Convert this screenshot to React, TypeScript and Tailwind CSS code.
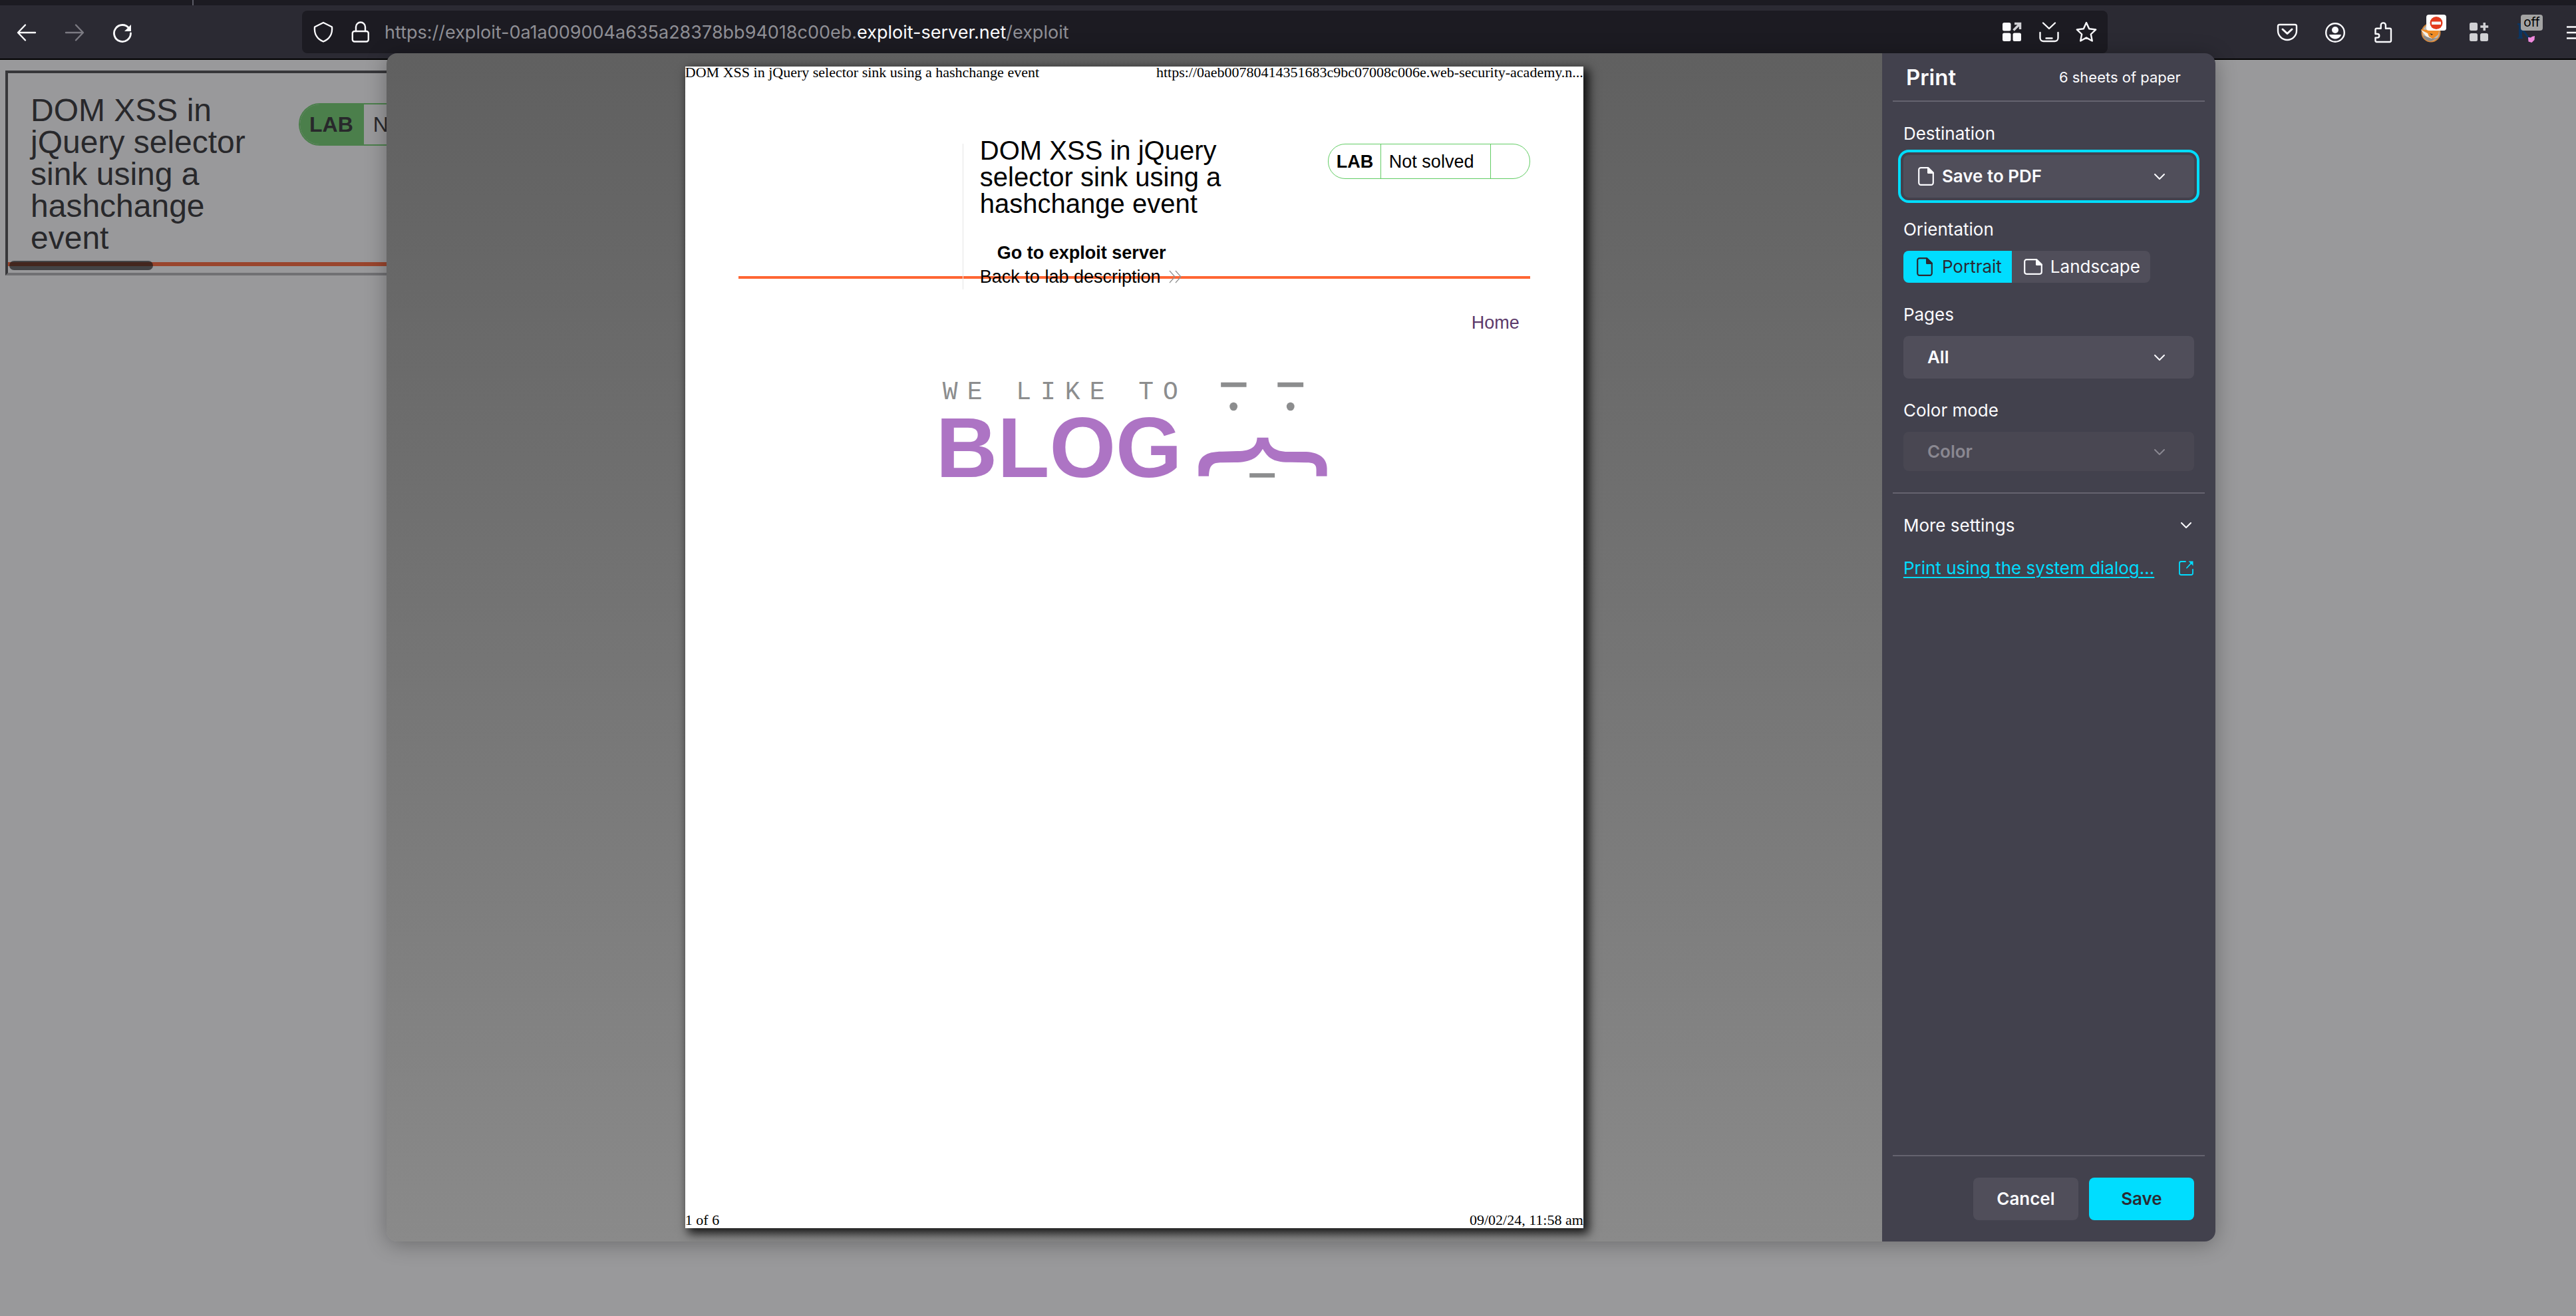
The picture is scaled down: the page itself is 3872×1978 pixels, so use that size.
import type { ReactNode } from "react";

type IconProps = { className?: string; children: ReactNode; viewBox?: string };

function Icon({ className = "size-8", children, viewBox = "0 0 32 32" }: IconProps) {
  return (
    <svg
      viewBox={viewBox}
      className={className}
      fill="none"
      stroke="currentColor"
      strokeWidth="2.4"
      strokeLinecap="round"
      strokeLinejoin="round"
      aria-hidden="true"
    >
      {children}
    </svg>
  );
}

function ToolButton({ label, children, className = "w-[72px]" }: { label: string; children: ReactNode; className?: string }) {
  return (
    <button type="button" aria-label={label} className={`relative flex h-16 shrink-0 items-center justify-center ${className}`}>
      {children}
    </button>
  );
}

function Chevron({ className }: { className: string }) {
  return (
    <svg viewBox="0 0 16 10" className={`h-[10px] w-4 ${className}`} fill="none" stroke="currentColor" strokeWidth="2" strokeLinecap="round" strokeLinejoin="round" aria-hidden="true">
      <path d="M1 1l7 7 7-7" />
    </svg>
  );
}

function PortraitIcon() {
  return (
    <svg viewBox="0 0 16 16" className="size-8 shrink-0" aria-hidden="true">
      <path fill="none" stroke="currentColor" strokeWidth="1.1" strokeLinejoin="round" d="M4 1.6h5.6l3.8 3.9v7.4a1.5 1.5 0 0 1-1.5 1.5H4.1a1.5 1.5 0 0 1-1.5-1.5V3.1A1.5 1.5 0 0 1 4.1 1.6z" />
      <path fill="currentColor" d="M9 1.2h1L13.9 5v1H9.8a.8.8 0 0 1-.8-.8z" />
    </svg>
  );
}

function LandscapeIcon() {
  return (
    <svg viewBox="0 0 16 16" className="size-8 shrink-0" aria-hidden="true">
      <path fill="none" stroke="currentColor" strokeWidth="1.1" strokeLinejoin="round" d="M3 2.6h7.6l3.8 3.9v5.4a1.5 1.5 0 0 1-1.5 1.5H3.1a1.5 1.5 0 0 1-1.5-1.5V4.1A1.5 1.5 0 0 1 3.1 2.6z" />
      <path fill="currentColor" d="M10 2.2h1L14.9 6v1h-4.1a.8.8 0 0 1-.8-.8z" />
    </svg>
  );
}

function Toolbar() {
  return (
    <header className="border-b-2 border-black bg-[#2b2a33] text-[#fbfbfe]">
      <div className="h-2 bg-[#1c1b22] pl-[289px]">
        <div className="h-2 w-0.5 bg-[#5b5b66]" />
      </div>
      <div className="flex h-20 items-center overflow-hidden pl-1 pt-0.5">
        <ToolButton label="Back">
          <Icon><path d="M29 16H4M14 4.500L3 16l11 11.500" /></Icon>
        </ToolButton>
        <ToolButton label="Forward">
          <Icon className="size-8 text-[#7b7a82]"><path d="M3 16h25M18 4.500L29 16 18 27.500" /></Icon>
        </ToolButton>
        <ToolButton label="Reload">
          <Icon>
            <path d="M26 9.500A12.500 12.500 0 1 0 28.500 17" strokeWidth="2.800" />
            <path d="M29 4v10h-10z" fill="currentColor" stroke="none" />
          </Icon>
        </ToolButton>

        <div className="-mt-0.5 ml-[234px] flex h-16 min-w-0 flex-1 items-center rounded-lg bg-[#1c1b22] px-1">
          <ToolButton label="Tracking protection" className="w-14">
            <Icon><path d="M16 2L29 8.500C30 19 25 27 16 30.500 7 27 2 19 3 8.500z" /></Icon>
          </ToolButton>
          <ToolButton label="Connection secure" className="w-14">
            <Icon>
              <rect x="3.800" y="15" width="24" height="15.500" rx="3" />
              <path d="M9 15V8.500a7 7 0 0 1 14 0V15" />
            </Icon>
          </ToolButton>
          <div role="textbox" aria-label="Address" className="min-w-0 flex-1 truncate pl-2 pt-0.5 font-['Inter',sans-serif] text-[27px] leading-9 text-[#8f8f95]">
            https://exploit-0a1a009004a635a28378bb94018c00eb.<span className="text-[#fbfbfe]">exploit-server.net</span>/exploit
          </div>
          <ToolButton label="Shortcuts" className="w-14">
            <Icon>
              <g fill="currentColor" stroke="none">
                <rect x="2" y="2" width="12.500" height="12.500" rx="2.500" />
                <rect x="2" y="17.500" width="12.500" height="12.500" rx="2.500" />
                <rect x="17.500" y="17.500" width="12.500" height="12.500" rx="2.500" />
              </g>
              <path d="M18.500 13.500L28 4M20 3.500h8.500V12" stroke="#d0d0d4" strokeWidth="3.500" strokeLinecap="butt" strokeLinejoin="miter" />
            </Icon>
          </ToolButton>
          <ToolButton label="Save page" className="w-14">
            <Icon><path d="M7 2.500l9 8.500 9-8.500M2.500 17v8a5 5 0 0 0 5 5h17a5 5 0 0 0 5-5v-8M11.500 25.500h9" /></Icon>
          </ToolButton>
          <ToolButton label="Bookmark" className="w-14">
            <Icon><path d="M16 2l4.200 9.300 10 1.200-7.400 7 2 10L16 24.600 7.200 29.500l2-10-7.400-7 10-1.200z" /></Icon>
          </ToolButton>
        </div>

        <div className="ml-[234px] flex">
          <ToolButton label="Pocket">
            <Icon>
              <path d="M4.500 4h23A2.500 2.500 0 0 1 30 6.500V13a14 14 0 0 1-28 0V6.500A2.500 2.500 0 0 1 4.500 4z" />
              <path d="M9 11l7 6.500 7-6.500" strokeWidth="3" />
            </Icon>
          </ToolButton>
          <ToolButton label="Account">
            <Icon>
              <circle cx="16" cy="16" r="13.800" />
              <circle cx="16" cy="12" r="5" fill="currentColor" stroke="none" />
              <path d="M7 19h18c-1 4-5 6.500-9 6.500S8 23 7 19z" fill="currentColor" stroke="none" />
            </Icon>
          </ToolButton>
          <ToolButton label="Extensions">
            <Icon><path d="M4.500 18V11.500A1.800 1.800 0 0 1 6.300 9.700H12.700V5a3.600 3.600 0 0 1 7.200 0v4.700h6.300A1.800 1.800 0 0 1 28 11.500v16.700a1.800 1.800 0 0 1-1.800 1.800H6.300a1.800 1.800 0 0 1-1.800-1.800V23.600h3a2.800 2.800 0 0 0 0-5.600z" /></Icon>
          </ToolButton>
          <ToolButton label="Fox extension, blocked">
            <Icon>
              <circle cx="16" cy="16" r="13.500" fill="#b9b9b9" stroke="#d98a3d" strokeWidth="2" />
              <path d="M1 11l9 1 8-3 11-2-2 12-9 7-6-2-6-4z" fill="#ef8c26" stroke="none" />
              <path d="M1 12l6 8 6 6 8 1-8-5-2-5z" fill="#f4f1ea" stroke="none" />
              <path d="M4 20a12 12 0 0 0 12 9l10-5-9 1z" fill="#8b8b8b" stroke="none" />
              <path d="M14 17l5 1.500-2 1.500z" fill="#2d2d2d" stroke="none" />
            </Icon>
            <svg viewBox="0 0 30 24" className="absolute left-[29px] top-[5px] h-6 w-[30px]" aria-hidden="true">
              <rect width="30" height="24" rx="4" fill="#fff" />
              <circle cx="15" cy="12.500" r="9.500" fill="#e33b1e" />
              <rect x="8" y="10.500" width="14" height="4.500" rx="0.500" fill="#f6f6f6" />
            </svg>
          </ToolButton>
          <ToolButton label="Add-on grid">
            <Icon>
              <g fill="#d0d0d4" stroke="none">
                <rect x="2" y="1" width="12" height="12" rx="2.500" />
                <rect x="2" y="17" width="12" height="12" rx="2.500" />
                <rect x="18" y="17" width="12" height="12" rx="2.500" />
                <path d="M22.500 1h3.500v4.200h4.200v3.500H26V13h-3.500V8.700h-4.200V5.200h4.200z" />
              </g>
            </Icon>
          </ToolButton>
          <ToolButton label="Proxy extension, off">
            <Icon>
              <path d="M2 2h8v2.500H9v18h1V25H2v-1.500h2V4.500H2z" fill="#0c3561" stroke="none" />
              <path d="M9 11l10 13" stroke="#0c3561" strokeWidth="3" />
              <path d="M18 23l4 .5 2-1.500 4-1-.5 6-4 4-5-1.500z" fill="#f08ade" stroke="none" />
            </Icon>
            <span className="absolute left-[27px] top-[5px] flex h-6 w-[33px] items-center justify-center rounded bg-[#a3a3a3] font-['Inter',sans-serif] text-[19px] leading-6 text-black">off</span>
          </ToolButton>
          <ToolButton label="Menu" className="w-[38px] overflow-hidden">
            <svg viewBox="0 0 14 20" className="ml-6 h-5 w-[14px]" stroke="currentColor" strokeWidth="2.400" aria-hidden="true">
              <path d="M0 1.500h14M0 10h14M0 18.500h14" />
            </svg>
          </ToolButton>
        </div>
      </div>
    </header>
  );
}

function ExploitPage() {
  return (
    <main className="flex-1 pl-2 pt-4 font-['Liberation_Sans',Arial,sans-serif] text-[#28282b]">
      <div className="relative w-[608px] border-4 border-b-[#707073] border-l-[#37373a] border-r-[#707073] border-t-[#37373a]">
        <div className="flex items-start pb-3 pl-[34px] pt-8">
          <h1 className="w-[350px] text-5xl leading-[48px]">DOM XSS in jQuery selector sink using a hashchange event</h1>
          <div className="ml-[53px] mt-[13px] flex h-16 flex-1 items-stretch overflow-hidden rounded-l-full border-2 border-[#4b7f4b] text-[32px] leading-[60px]">
            <strong className="bg-[#4b7f4b] pl-3.5 pr-4">LAB</strong>
            <span className="whitespace-nowrap pl-3.5">Not solved</span>
          </div>
        </div>
        <div className="mb-[10px] h-1.5 bg-[#99452d]" />
        <div className="absolute bottom-1 left-0.5 h-[14px] w-[216px] rounded-full bg-[#151517]/65" />
      </div>
    </main>
  );
}

function BlogLogo() {
  return (
    <div className="mt-[67px] flex items-start justify-center gap-6 pr-2">
      <div className="w-[370px] whitespace-nowrap">
        <p className="pl-2.5 font-['Liberation_Mono',monospace] text-[38px] leading-10 tracking-[14px] text-[#8c8d8e]">WE LIKE TO</p>
        <p className="text-[128px] font-bold leading-[126px] text-[#ad74c4]">BLOG</p>
      </div>
      <svg viewBox="1000 100 460 432" preserveAspectRatio="none" className="mt-1 h-36 w-[194px]" aria-hidden="true">
        <g fill="#8c8d8e">
          <path d="M1081 102h91v21h-91zM1283 102h92v21h-92zM1183 512h90v19h-90z" />
          <ellipse cx="1126" cy="211" rx="14" ry="19" />
          <ellipse cx="1329" cy="211" rx="14" ry="19" />
        </g>
        <path
          fill="#ad74c4"
          d="M1001 525V490C1001 440 1025 414 1085 414L1140 412C1190 412 1209 390 1210 351H1250C1251 390 1272 414 1320 415L1385 415C1432 418 1459 445 1459 490V525H1421V495C1421 470 1410 464 1385 464L1330 462C1265 464 1248 440 1230 402C1212 440 1192 462 1130 463L1085 464C1050 464 1040 475 1038 525Z"
        />
      </svg>
    </div>
  );
}

function PrintPage() {
  return (
    <article className="flex aspect-[1350/1746] h-full flex-col bg-white font-['Liberation_Sans',Arial,sans-serif] text-[27px] leading-9 text-black shadow-[6px_6px_14px_2px_rgb(0_0_0/0.85)]">
      <div className="flex justify-between font-['Liberation_Serif','Times_New_Roman',serif] text-[22px] leading-[18px]">
        <span>DOM XSS in jQuery selector sink using a hashchange event</span>
        <span>https://0aeb00780414351683c9bc07008c006e.web-security-academy.n...</span>
      </div>

      <section className="mx-20 mt-[98px] flex h-[203px] items-start justify-between border-b-4 border-[#ff6633]">
        <div className="ml-[337px] h-[219px] border-l border-[#e5e5e5] pl-[25px]">
          <h2 className="-mt-2.5 w-[380px] text-[40px] leading-10">DOM XSS in jQuery selector sink using a hashchange event</h2>
          <a href="#exploit-server" className="mt-9 block pl-[26px] font-bold">Go to exploit server</a>
          <a href="#lab" className="flex items-center gap-3 whitespace-nowrap">
            Back to lab description
            <svg viewBox="0 0 20 20" className="size-5" fill="none" stroke="#8f8f8f" strokeWidth="1.200" aria-hidden="true">
              <path d="M1 1l8 9-8 9M10 1l8 9-8 9" />
            </svg>
          </a>
        </div>
        <div className="flex h-[53px] w-[304px] overflow-hidden rounded-[26px] border border-[#62cc64] leading-[53px]">
          <strong className="w-[79px] border-r border-[#62cc64] pl-3">LAB</strong>
          <span className="w-[165px] border-r border-[#62cc64] pl-3">Not solved</span>
        </div>
      </section>

      <nav className="mx-20 mt-12 flex justify-end pr-4">
        <a href="#home" className="text-[#5c3a6b]">Home</a>
      </nav>

      <BlogLogo />

      <div className="mt-auto flex justify-between font-['Liberation_Serif','Times_New_Roman',serif] text-[22px] leading-6">
        <span>1 of 6</span>
        <span>09/02/24, 11:58 am</span>
      </div>
    </article>
  );
}

function Rule() {
  return <hr className="mx-4 h-0.5 shrink-0 border-0 bg-[#65636f]" />;
}

function PrintSettings() {
  return (
    <form className="flex w-[501px] shrink-0 flex-col bg-[#42414d] font-['Inter',sans-serif] text-[26px] leading-8 text-[#fbfbfe]">
      <div className="flex h-[71px] items-center justify-between pl-9 pr-[52px]">
        <h2 className="text-[33px] font-semibold">Print</h2>
        <p className="text-[22px]">6 sheets of paper</p>
      </div>
      <Rule />

      <div className="flex flex-col gap-8 p-8">
        <div className="flex flex-col gap-4">
          <label htmlFor="destination">Destination</label>
          <div className="relative rounded-lg bg-[#504e5a] outline-4 outline-offset-4 outline-[#00ddff]">
            <select id="destination" className="block h-16 w-full appearance-none bg-transparent pl-[58px] font-semibold outline-none">
              <option>Save to PDF</option>
            </select>
            <span className="pointer-events-none absolute left-[18px] top-4"><PortraitIcon /></span>
            <Chevron className="pointer-events-none absolute right-11 top-7" />
          </div>
        </div>

        <fieldset>
          <legend className="mb-4">Orientation</legend>
          <div className="flex h-12 w-fit overflow-hidden rounded-lg bg-[#504e5a]">
            <label className="flex items-center gap-2.5 pl-4 pr-[15px] has-checked:bg-[#00ddff] has-checked:text-[#2b2a33]">
              <input type="radio" name="orientation" defaultChecked className="sr-only" />
              <PortraitIcon />
              Portrait
            </label>
            <label className="flex items-center gap-2.5 pl-4 pr-[15px] has-checked:bg-[#00ddff] has-checked:text-[#2b2a33]">
              <input type="radio" name="orientation" className="sr-only" />
              <LandscapeIcon />
              Landscape
            </label>
          </div>
        </fieldset>

        <div className="flex flex-col gap-4">
          <label htmlFor="pages">Pages</label>
          <div className="relative rounded-lg bg-[#504e5a]">
            <select id="pages" className="block h-16 w-full appearance-none bg-transparent pl-9 font-semibold outline-none">
              <option>All</option>
            </select>
            <Chevron className="pointer-events-none absolute right-11 top-7" />
          </div>
        </div>

        <div className="flex flex-col gap-4">
          <label htmlFor="color">Color mode</label>
          <div className="relative rounded-lg bg-[#494752] text-[#8a8891]">
            <select id="color" disabled className="block h-[59px] w-full appearance-none bg-transparent pl-9 font-semibold opacity-100 outline-none">
              <option>Color</option>
            </select>
            <Chevron className="pointer-events-none absolute right-11 top-[26px]" />
          </div>
        </div>
      </div>
      <Rule />

      <div className="flex flex-col gap-8 p-8">
        <button type="button" className="flex items-center justify-between pr-1 text-left">
          More settings
          <Chevron className="" />
        </button>
        <a href="#system-dialog" className="flex items-center justify-between text-[#00ddff]">
          <span className="underline decoration-2 underline-offset-4">Print using the system dialog…</span>
          <svg viewBox="0 0 24 24" className="size-6" fill="none" stroke="currentColor" strokeWidth="1.800" strokeLinecap="round" strokeLinejoin="round" aria-hidden="true">
            <path d="M11 2H4.500A2.500 2.500 0 0 0 2 4.500v15A2.500 2.500 0 0 0 4.500 22h15a2.500 2.500 0 0 0 2.500-2.500V14M13 11.500L21 3" />
            <path d="M15.500 1.500h7v7z" fill="currentColor" stroke="none" />
          </svg>
        </a>
      </div>

      <div className="mt-auto">
        <Rule />
        <div className="flex justify-end gap-4 p-8 font-semibold">
          <button type="button" className="h-16 w-[158px] rounded-lg bg-[#504e5a]">Cancel</button>
          <button type="submit" className="h-16 w-[158px] rounded-lg bg-[#00ddff] text-[#2b2a33]">Save</button>
        </div>
      </div>
    </form>
  );
}

export default function App() {
  return (
    <div className="relative flex min-h-screen flex-col overflow-hidden bg-[#99999b]">
      <Toolbar />
      <ExploitPage />
      <div role="dialog" aria-label="Print" className="absolute bottom-28 left-[15%] top-20 flex w-[71%] overflow-hidden rounded-2xl shadow-[0_4px_32px_rgb(0_0_0/0.3)]">
        <div className="flex min-w-0 flex-1 justify-center bg-linear-to-b from-[#606060] to-[#8a8a8a] py-5">
          <PrintPage />
        </div>
        <PrintSettings />
      </div>
    </div>
  );
}
